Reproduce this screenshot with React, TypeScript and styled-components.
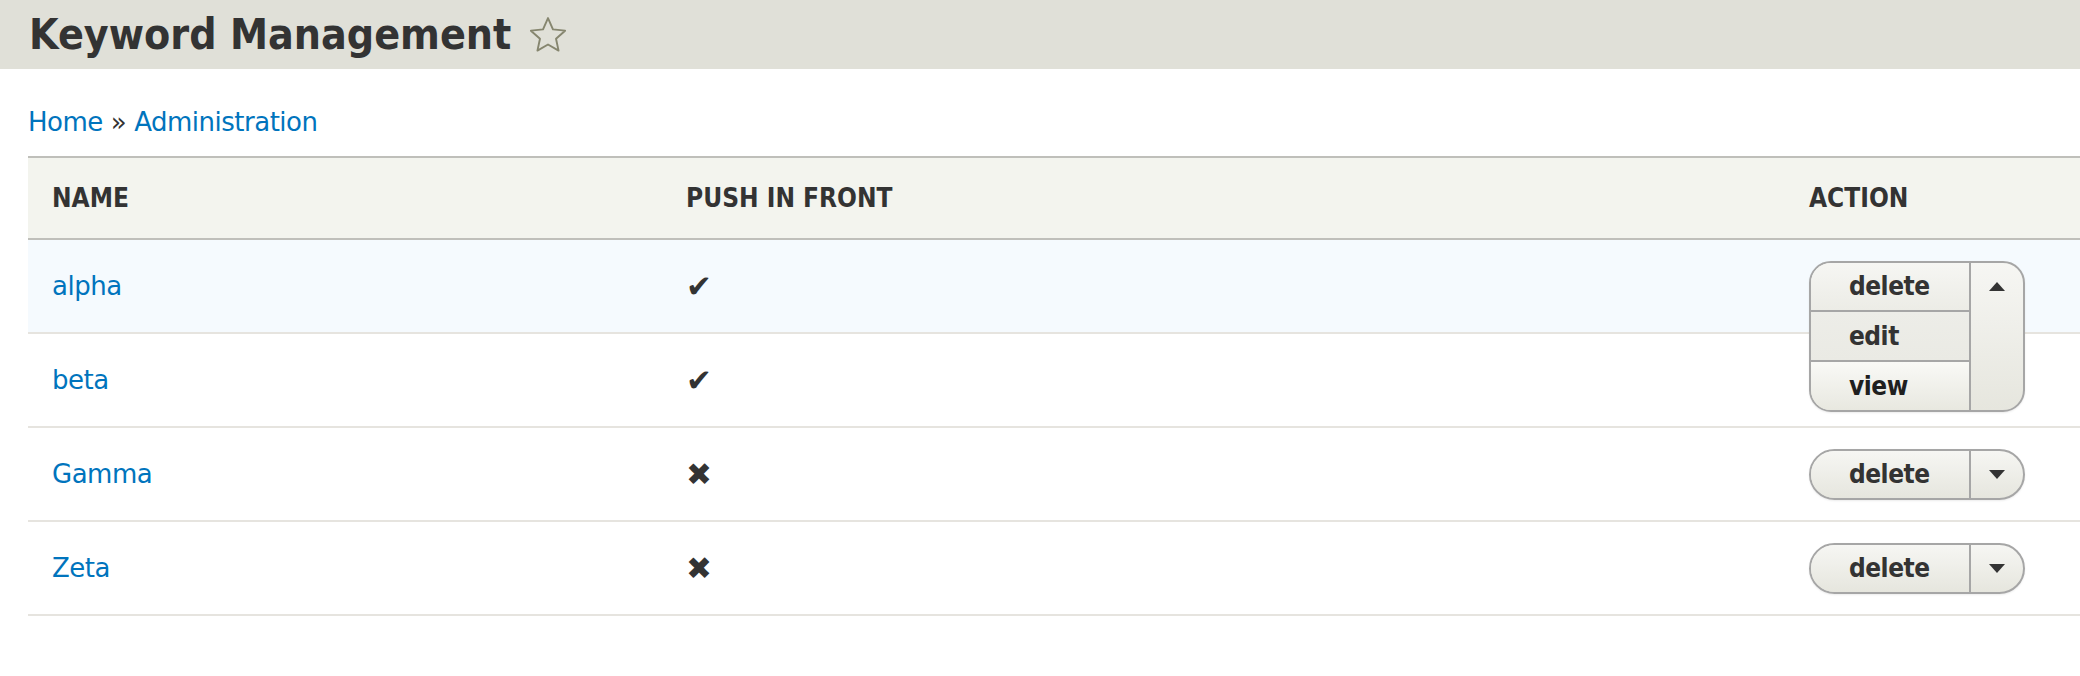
import React from "react";
import styled, { createGlobalStyle } from "styled-components";

const GlobalStyle = createGlobalStyle`
  html, body { margin: 0; padding: 0; background: #ffffff; overflow: hidden; }
  body {
    font-family: "DejaVu Sans", "Liberation Sans", sans-serif;
    color: #333333;
  }
  * { box-sizing: border-box; }
`;

const condensed = `
  font-family: "DejaVu Sans Condensed", "DejaVu Sans", sans-serif;
  font-stretch: condensed;
`;

const PageHeader = styled.header`
  height: 69px;
  background: #e0e0d8;
  display: flex;
  align-items: center;
  gap: 18px;
  padding: 0 29px;
`;

const Title = styled.h1`
  margin: 0;
  ${condensed}
  font-weight: bold;
  font-size: 42.5px;
  line-height: 1;
  color: #333333;
  padding-top: 2px;
`;

const StarButton = styled.span`
  display: inline-flex;
  width: 38px;
  height: 38px;
  color: #86866f;
`;

const Main = styled.main`
  padding: 0 0 0 28px;
`;

const Breadcrumb = styled.nav`
  margin-top: 34px;
  font-size: 26px;
  line-height: 39px;
  letter-spacing: -0.5px;
  color: #333333;
`;

const Crumb = styled.a`
  color: #0074bd;
  text-decoration: none;
`;

const Sep = styled.span`
  margin: 0 8px;
  color: #333333;
`;

const Table = styled.table`
  margin-top: 14px;
  width: 100%;
  border-collapse: separate;
  border-spacing: 0;
  table-layout: fixed;
`;

const HeadCell = styled.th<{ $w?: number }>`
  ${condensed}
  width: ${(p) => (p.$w ? `${p.$w}px` : "auto")};
  height: 84px;
  padding: 0 0 0 24px;
  text-align: left;
  font-weight: bold;
  font-size: 26px;
  text-transform: uppercase;
  color: #333333;
  background: #f3f4ee;
  border-top: 2px solid #bfbfba;
  border-bottom: 2px solid #bfbfba;
  vertical-align: middle;
`;

const Row = styled.tr<{ $hl?: boolean }>`
  background: ${(p) => (p.$hl ? "#f5fafe" : "#ffffff")};
`;

const Cell = styled.td`
  height: 94px;
  padding: 0 0 0 24px;
  border-bottom: 2px solid #e6e4df;
  vertical-align: middle;
  font-size: 26px;
  letter-spacing: -0.5px;
`;

const NameLink = styled.a`
  color: #0074bd;
  text-decoration: none;
`;

const Mark = styled.span`
  display: inline-block;
  font-size: 31px;
  line-height: 1;
  color: #333333;
  padding-top: 2px;
`;

const Holder = styled.div`
  height: 51px;
`;

const Widget = styled.div<{ $open?: boolean }>`
  position: relative;
  z-index: ${(p) => (p.$open ? 3 : 1)};
  display: inline-flex;
  align-items: stretch;
  border: 2px solid #a6a6a6;
  border-radius: ${(p) => (p.$open ? "22px" : "26px")};
  background: linear-gradient(to bottom, #f6f6f3, #e6e6de);
  overflow: hidden;
  box-shadow: 0 1px 2px rgba(0, 0, 0, 0.08);
`;

const Items = styled.ul`
  list-style: none;
  margin: 0;
  padding: 0;
  width: 158px;
  display: flex;
  flex-direction: column;
`;

const itemBg: Record<string, string> = {
  first: "linear-gradient(to bottom, #f6f6f3, #ececE6)",
  plain: "linear-gradient(to bottom, #ededE8, #eaeae4)",
  last: "linear-gradient(to bottom, #f9f9f6, #e8e8e0)",
  single: "linear-gradient(to bottom, #f6f6f3, #e6e6de)",
};

const Item = styled.li<{ $v: string }>`
  ${condensed}
  height: 47px;
  flex: none;
  display: flex;
  align-items: center;
  padding-left: 38px;
  font-weight: bold;
  font-size: 26px;
  color: ${(p) => (p.$v === "last" ? "#1f1f1f" : "#333333")};
  background: ${(p) => itemBg[p.$v]};
  & + & {
    height: 50px;
    border-top: 2px solid #a6a6a6;
  }
`;

const Toggle = styled.div`
  width: 54px;
  border-left: 2px solid #a6a6a6;
  display: flex;
  flex-direction: column;
`;

const ArrowSlot = styled.div`
  height: 47px;
  display: flex;
  align-items: center;
  justify-content: center;
`;

const Star = () => (
  <svg width="38" height="38" viewBox="0 0 36 36" fill="none">
    <polygon
      points="18,2 22.7,12.7 34.2,13.9 25.6,21.6 28,32.8 18,27 8,32.8 10.4,21.6 1.8,13.9 13.3,12.7"
      stroke="currentColor"
      strokeWidth="1.8"
      strokeLinejoin="round"
    />
  </svg>
);

const Arrow = ({ up }: { up?: boolean }) => (
  <svg width="16" height="9" viewBox="0 0 16 9">
    <polygon points={up ? "0,9 16,9 8,0" : "0,0 16,0 8,9"} fill="#333333" />
  </svg>
);

const Dropbutton = ({ actions, open }: { actions: string[]; open?: boolean }) => {
  const shown = open ? actions : actions.slice(0, 1);
  return (
    <Holder>
      <Widget $open={open}>
        <Items>
          {shown.map((a, i) => (
            <Item
              key={a}
              $v={
                shown.length === 1
                  ? "single"
                  : i === 0
                  ? "first"
                  : i === shown.length - 1
                  ? "last"
                  : "plain"
              }
            >
              {a}
            </Item>
          ))}
        </Items>
        <Toggle>
          <ArrowSlot>
            <Arrow up={open} />
          </ArrowSlot>
        </Toggle>
      </Widget>
    </Holder>
  );
};

const rows = [
  { name: "alpha", push: true, open: true, hl: true, button: true },
  { name: "beta", push: true, open: false, hl: false, button: false },
  { name: "Gamma", push: false, open: false, hl: false, button: true },
  { name: "Zeta", push: false, open: false, hl: false, button: true },
];

export default function App() {
  return (
    <>
      <GlobalStyle />
      <PageHeader>
        <Title>Keyword Management</Title>
        <StarButton>
          <Star />
        </StarButton>
      </PageHeader>
      <Main>
        <Breadcrumb>
          <Crumb href="#">Home</Crumb>
          <Sep>»</Sep>
          <Crumb href="#">Administration</Crumb>
        </Breadcrumb>
        <Table>
          <thead>
            <tr>
              <HeadCell $w={634}>Name</HeadCell>
              <HeadCell $w={1123}>Push in front</HeadCell>
              <HeadCell>Action</HeadCell>
            </tr>
          </thead>
          <tbody>
            {rows.map((r) => (
              <Row key={r.name} $hl={r.hl}>
                <Cell>
                  <NameLink href="#">{r.name}</NameLink>
                </Cell>
                <Cell>
                  <Mark>{r.push ? "✔" : "✖"}</Mark>
                </Cell>
                <Cell>
                  {r.button && (
                    <Dropbutton actions={["delete", "edit", "view"]} open={r.open} />
                  )}
                </Cell>
              </Row>
            ))}
          </tbody>
        </Table>
      </Main>
    </>
  );
}
